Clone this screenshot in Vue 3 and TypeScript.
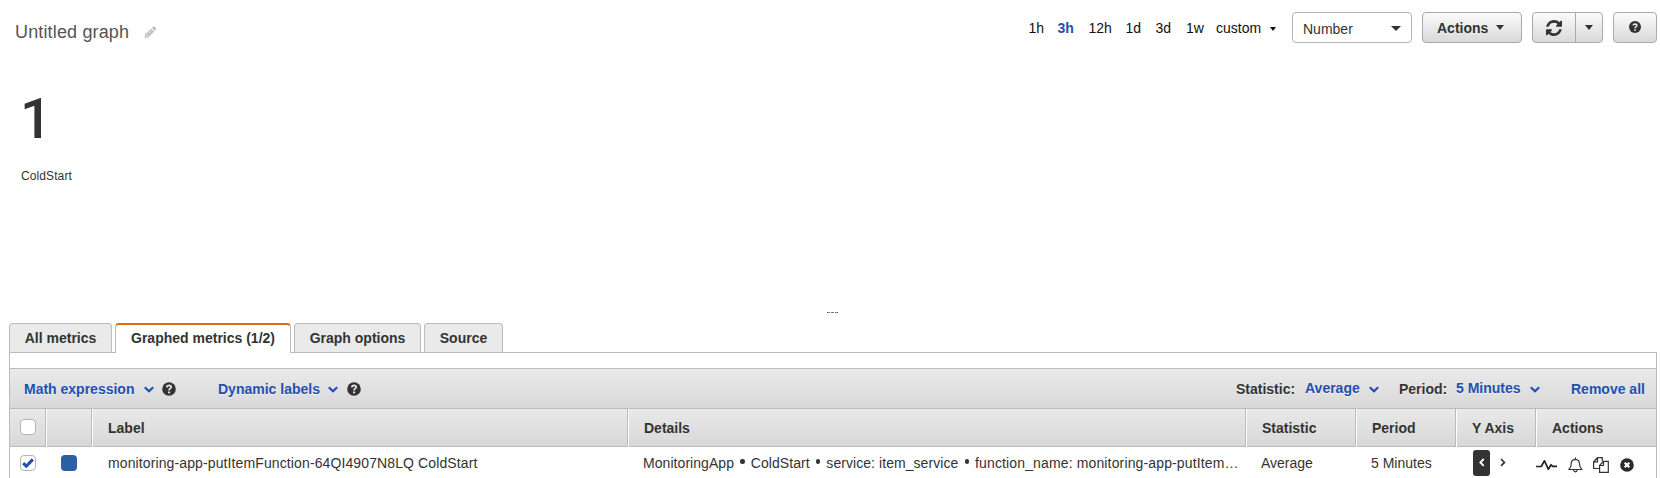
<script setup lang="ts">
import { ref } from 'vue'

interface Range { label: string; width: number }
interface Tab { label: string; width: number }
interface Column { key: string; label: string }

const ranges: Range[] = [
  { label: '1h', width: 29 },
  { label: '3h', width: 31 },
  { label: '12h', width: 37 },
  { label: '1d', width: 30 },
  { label: '3d', width: 30.5 },
  { label: '1w', width: 30 },
]
const activeRange = ref('3h')

const tabs: Tab[] = [
  { label: 'All metrics', width: 103 },
  { label: 'Graphed metrics (1/2)', width: 176 },
  { label: 'Graph options', width: 127 },
  { label: 'Source', width: 79 },
]
const activeTab = ref('Graphed metrics (1/2)')

const columns: Column[] = [
  { key: 'check', label: '' },
  { key: 'color', label: '' },
  { key: 'label', label: 'Label' },
  { key: 'details', label: 'Details' },
  { key: 'statistic', label: 'Statistic' },
  { key: 'period', label: 'Period' },
  { key: 'axis', label: 'Y Axis' },
  { key: 'actions', label: 'Actions' },
]
const details = ['MonitoringApp', 'ColdStart', 'service: item_service', 'function_name: monitoring-app-putItem…']
const selected = ref(true)
</script>

<template>
  <div class="page">
    <header class="top">
      <h1 class="title">Untitled graph</h1>
      <svg class="pencil" width="13" height="13" viewBox="0 0 13 13">
        <path d="M1 8.6 7.1 2.5 10.2 5.6 4.1 11.7 .7 12.2Z" fill="#c4c4c4" />
        <path d="M7.9 1.8 9 .7Q9.7.1 10.4.7L12 2.3Q12.6 3 12 3.7L10.9 4.8Z" fill="#bbb" />
        <path d="M3.2 8.8 7.4 4.6" stroke="#eee" stroke-width=".6" fill="none" />
        <path d="M1.8 10.2h1v1" stroke="#fff" stroke-width=".8" fill="none" />
      </svg>
      <nav class="ranges">
        <a
          v-for="r in ranges"
          :key="r.label"
          :class="{ on: r.label === activeRange }"
          :style="{ width: r.width + 'px' }"
          @click="activeRange = r.label"
        >{{ r.label }}</a>
        <a class="custom">custom</a>
        <i class="caret small"></i>
      </nav>
      <div class="select"><span>Number</span><i class="caret wide"></i></div>
      <button class="btn menu"><span>Actions</span><i class="caret"></i></button>
      <div class="btn split">
        <span class="refresh">
          <svg width="16" height="16" viewBox="0 0 1536 1536">
            <path fill="#333" d="M1511 928q0 5-1 7-64 268-268 434.500T764 1536q-146 0-282.500-55T238 1324l-129 129q-19 19-45 19t-45-19-19-45V960q0-26 19-45t45-19h448q26 0 45 19t19 45-19 45l-137 137q71 66 161 102t187 36q134 0 250-65t186-179q11-17 53-117 8-23 30-23h192q13 0 22.500 9.500t9.500 22.500zm25-800v448q0 26-19 45t-45 19h-448q-26 0-45-19t-19-45 19-45l138-138Q969 256 768 256q-134 0-250 65T332 500q-11 17-53 117-8 23-30 23H50q-13 0-22.500-9.500T18 608v-7q65-268 270-434.500T768 0q146 0 284 55.500T1297 212l130-129q19-19 45-19t45 19 19 45z" />
          </svg>
        </span>
        <i class="caret drop"></i>
      </div>
      <button class="btn help">
        <svg width="12" height="12" viewBox="0 0 14 14">
          <circle cx="7" cy="7" r="7" fill="#333" />
          <path d="M4.8 5.3Q5 3.4 7.1 3.4 9.3 3.5 9.2 5.2 9.1 6.2 7.9 6.8 7.1 7.2 7.1 8.4" fill="none" stroke="#eee" stroke-width="1.8" />
          <path d="M6.1 9.5h2v1.9h-2z" fill="#eee" />
        </svg>
      </button>
    </header>

    <section class="graph">
      <div class="value">1</div>
      <div class="metric">ColdStart</div>
      <div class="splitter"><i></i><i></i><i></i></div>
    </section>

    <nav class="tabs">
      <a
        v-for="t in tabs"
        :key="t.label"
        class="tab"
        :class="{ active: t.label === activeTab }"
        :style="{ width: t.width + 'px' }"
        @click="activeTab = t.label"
      >{{ t.label }}</a>
    </nav>

    <section class="panel">
      <div class="toolbar">
        <a class="link math">Math expression</a>
        <svg class="chev" width="10" height="7" viewBox="0 0 10 7"><path d="M.8 1.2 5 5.2 9.2 1.2" /></svg>
        <svg class="q first" width="14" height="14" viewBox="0 0 14 14">
          <circle cx="7" cy="7" r="6.8" fill="#333" />
          <path d="M4.8 5.3Q5 3.4 7.1 3.4 9.3 3.5 9.2 5.2 9.1 6.2 7.9 6.8 7.1 7.2 7.1 8.4" fill="none" stroke="#e4e4e4" stroke-width="1.8" />
          <path d="M6.1 9.5h2v1.9h-2z" fill="#e4e4e4" />
        </svg>
        <a class="link dynamic">Dynamic labels</a>
        <svg class="chev" width="10" height="7" viewBox="0 0 10 7"><path d="M.8 1.2 5 5.2 9.2 1.2" /></svg>
        <svg class="q" width="14" height="14" viewBox="0 0 14 14">
          <circle cx="7" cy="7" r="6.8" fill="#333" />
          <path d="M4.8 5.3Q5 3.4 7.1 3.4 9.3 3.5 9.2 5.2 9.1 6.2 7.9 6.8 7.1 7.2 7.1 8.4" fill="none" stroke="#e4e4e4" stroke-width="1.8" />
          <path d="M6.1 9.5h2v1.9h-2z" fill="#e4e4e4" />
        </svg>
        <span class="caption stat">Statistic:</span>
        <a class="link raised average">Average</a>
        <svg class="chev" width="10" height="7" viewBox="0 0 10 7"><path d="M.8 1.2 5 5.2 9.2 1.2" /></svg>
        <span class="caption per">Period:</span>
        <a class="link raised minutes">5 Minutes</a>
        <svg class="chev" width="10" height="7" viewBox="0 0 10 7"><path d="M.8 1.2 5 5.2 9.2 1.2" /></svg>
        <a class="link remove">Remove all</a>
      </div>

      <div class="grid head">
        <div v-for="c in columns" :key="c.key" class="th" :class="c.key">
          <span v-if="c.key === 'check'" class="box"></span>
          <template v-else>{{ c.label }}</template>
        </div>
      </div>

      <div class="grid row">
        <div class="check">
          <span class="box" @click="selected = !selected">
            <svg v-if="selected" width="12" height="10" viewBox="0 0 12 10">
              <path d="M1.2 5.2 4.3 8.2 10.8 1.4" fill="none" stroke="#1f4fb0" stroke-width="3" />
            </svg>
          </span>
        </div>
        <div class="color"><span class="swatch"></span></div>
        <div class="cell name">monitoring-app-putItemFunction-64QI4907N8LQ ColdStart</div>
        <div class="cell info">
          <template v-for="(d, i) in details" :key="d"><i v-if="i" class="dot"></i><span>{{ d }}</span></template>
        </div>
        <div class="cell">Average</div>
        <div class="cell">5 Minutes</div>
        <div class="axes">
          <span class="left"><svg width="6" height="9" viewBox="0 0 6 9"><path d="M4.7 1 1.4 4.4 4.7 7.8" fill="none" stroke="#fff" stroke-width="1.9" /></svg></span>
          <svg class="right" width="6" height="9" viewBox="0 0 6 9"><path d="M1 1 4.4 4.4 1 7.8" fill="none" stroke="#333" stroke-width="1.7" /></svg>
        </div>
        <div class="tools">
          <svg class="pulse" width="21" height="12" viewBox="0 0 21 12"><path d="M0 7.5H5.2L8.5 1.8 12.3 10.2 15.1 5.8 16.4 7.3H21" fill="none" stroke="#222" stroke-width="1.7" stroke-linejoin="round" /></svg>
          <svg class="bell" width="15" height="16" viewBox="0 0 15 16">
            <path d="M.8 12.5Q3.2 10.5 3.2 6.7 3.2 2.7 7.3 2.3 11.5 2.7 11.5 6.7 11.5 10.5 14 12.5ZM7.4 2.3V.6M5.6 12.8Q5.8 14.8 7.4 14.8 9 14.8 9.2 12.8" fill="none" stroke="#333" stroke-width="1.2" stroke-linejoin="round" />
          </svg>
          <svg class="copy" width="16" height="16" viewBox="0 0 16 16">
            <path d="M6.5 11.5H.6V4.8L4.5.7H9.3V4.3M4.5.7V4.8H.6M6.6 8.5 10.5 4.4H15.3V15.3H6.6ZM10.5 4.4V8.5H6.6" fill="none" stroke="#333" stroke-width="1.2" />
          </svg>
          <svg class="close" width="14" height="14" viewBox="0 0 14 14">
            <circle cx="7" cy="7" r="6.8" fill="#2b2b2b" />
            <path d="M4.7 4.7l4.6 4.6m0-4.6-4.6 4.6" stroke="#fff" stroke-width="2.2" />
          </svg>
        </div>
      </div>
    </section>
  </div>
</template>

<style>
body {
  margin: 0;
  background: #fff;
}
</style>

<style scoped>
.page {
  box-sizing: border-box;
  width: 1660px;
  height: 478px;
  overflow: hidden;
  display: flex;
  flex-direction: column;
  background: #fff;
  color: #333;
  font: 14px/16px "Liberation Sans", Arial, sans-serif;
  white-space: nowrap;
}
.page svg { display: block; flex: none; }
.top {
  display: flex;
  align-items: flex-start;
  height: 72px;
  padding-top: 12px;
  box-sizing: border-box;
}
.title {
  width: 129px;
  margin: 10px 0 0 15px;
  font-size: 18px;
  line-height: 20px;
  font-weight: 400;
  letter-spacing: .15px;
  color: #555;
}
.pencil { margin-top: 14px; }
.ranges {
  display: flex;
  margin: 8px 0 0 871.5px;
  width: 263.5px;
  color: #111;
  line-height: 17px;
}
.ranges a { flex: none; }
.ranges .on { color: #1f4fb0; font-weight: 700; }
.ranges .custom { width: 53.5px; }
.caret {
  flex: none;
  width: 0;
  height: 0;
  border: 4.5px solid transparent;
  border-top: 5px solid #333;
  border-bottom: 0;
}
.caret.small { border-width: 4px 3.5px 0; margin-top: 7px; border-top-color: #111; }
.caret.wide { border-width: 5.5px 5px 0; }
.select {
  box-sizing: border-box;
  display: flex;
  justify-content: space-between;
  align-items: center;
  width: 120px;
  height: 31px;
  padding: 2px 10px 0 10px;
  border: 1px solid #b4b4b4;
  border-radius: 4px;
  color: #333;
}
.select .caret { margin-top: -1px; }
.btn {
  box-sizing: border-box;
  display: flex;
  align-items: center;
  height: 31px;
  margin: 0 0 0 10px;
  padding: 0;
  border: 1px solid #aaa;
  border-radius: 4px;
  background: linear-gradient(#fbfbfb, #d9d9d9);
  color: #333;
  font: inherit;
}
.menu { width: 100px; padding-left: 14px; font-weight: 700; gap: 8px; }
.menu .caret { margin-top: -1px; }
.split { width: 71px; }
.refresh { width: 43px; height: 29px; border-right: 1px solid #aaa; padding: 7px 0 0 13px; box-sizing: border-box; }
.drop { margin: -1px 0 0 9px; }
.help { width: 44px; justify-content: center; }
.help svg { margin-top: -1px; }

.graph { height: 251px; display: flex; flex-direction: column; }
.value {
  margin: 15px 0 0 20px;
  height: 63px;
  font: 500 56px/64px Roboto, sans-serif;
}
.metric { margin: 19px 0 0 21px; font-size: 12px; line-height: 14px; letter-spacing: .1px; }
.splitter { display: flex; gap: 1px; margin: auto 0 10px 827px; }
.splitter i { width: 3px; height: 1px; background: #777; }

.tabs { display: flex; gap: 3px; height: 29px; margin-left: 9px; flex: none; }
.tab {
  box-sizing: border-box;
  height: 29px;
  border: 1px solid #bbb;
  border-bottom: 0;
  border-radius: 4px 4px 0 0;
  background: #eaeaea;
  font-weight: 700;
  line-height: 29px;
  text-align: center;
}
.tab.active {
  height: 30px;
  border-top: 2px solid #dd6b10;
  background: #fff;
  line-height: 27px;
  z-index: 1;
}

.panel {
  box-sizing: border-box;
  width: 1648px;
  margin-left: 9px;
  height: 126px;
  border: 1px solid #bbb;
  border-bottom: 0;
  padding-top: 15px;
}
.toolbar {
  box-sizing: border-box;
  display: flex;
  align-items: center;
  height: 41px;
  border: solid #bbb;
  border-width: 1px 0;
  background: linear-gradient(#eaeaea, #d8d8d8);
  font-weight: 700;
  text-shadow: 0 1px 0 rgba(255, 255, 255, .6);
}
.toolbar > * { flex: none; }
.link { color: #1f4fb0; }
.raised { margin-top: -2px; }
.chev { fill: none; stroke: #1f4fb0; stroke-width: 2.2; margin-top: 1px; }
.q { margin-left: 9px; }
.q.first { margin: 0 1px 0 8px; }
.math { width: 120px; margin-left: 14px; }
.dynamic { width: 110px; margin-left: 41px; }
.stat { width: 69px; margin-left: 875px; }
.average { width: 64px; }
.per { width: 57px; margin-left: 20px; }
.minutes { width: 74px; }
.remove { margin-left: 31px; }

.grid {
  display: grid;
  grid-template-columns: 36px 46px 536px 618px 110px 100px 80px 120px;
}
.head { height: 37px; border-bottom: 1px solid #bbb; background: linear-gradient(#e9e9e9, #d8d8d8); font-weight: 700; }
.th {
  box-sizing: border-box;
  padding-left: 16px;
  line-height: 38px;
  border-right: 1px solid #bbb;
  box-shadow: inset 1px 0 #fff;
}
.th.check { padding: 10px 0 0 10px; box-shadow: none; }
.th.actions { border-right: 0; }
.box {
  box-sizing: border-box;
  display: flex;
  align-items: center;
  justify-content: center;
  width: 16px;
  height: 16px;
  border: 1px solid #b4b4b4;
  border-radius: 4px;
  background: #fff;
}
.row { height: 38px; }
.row .check { padding: 8px 0 0 10px; }
.swatch { display: block; width: 16px; height: 16px; margin: 8px 0 0 15px; border-radius: 4px; background: #2b60a5; }
.cell { padding: 8px 0 0 15px; }
.cell.name { padding-left: 16px; letter-spacing: .115px; }
.info { display: flex; letter-spacing: .06px; }
.info span:last-child { letter-spacing: .14px; }
.dot { width: 4.5px; height: 4.5px; margin: 4px 6px 0 6.2px; border-radius: 50%; background: #333; }
.axes { display: flex; padding: 3px 0 0 17px; }
.left { width: 17px; height: 26px; box-sizing: border-box; padding: 8px 0 0 6px; border-radius: 3px; background: #333; }
.right { margin: 8px 0 0 10px; }
.tools { display: flex; align-items: flex-start; }
.pulse { margin: 12px 0 0 0; }
.bell { margin: 10px 0 0 11px; }
.copy { margin: 10px 0 0 10px; }
.close { margin: 11px 0 0 11px; }
</style>
